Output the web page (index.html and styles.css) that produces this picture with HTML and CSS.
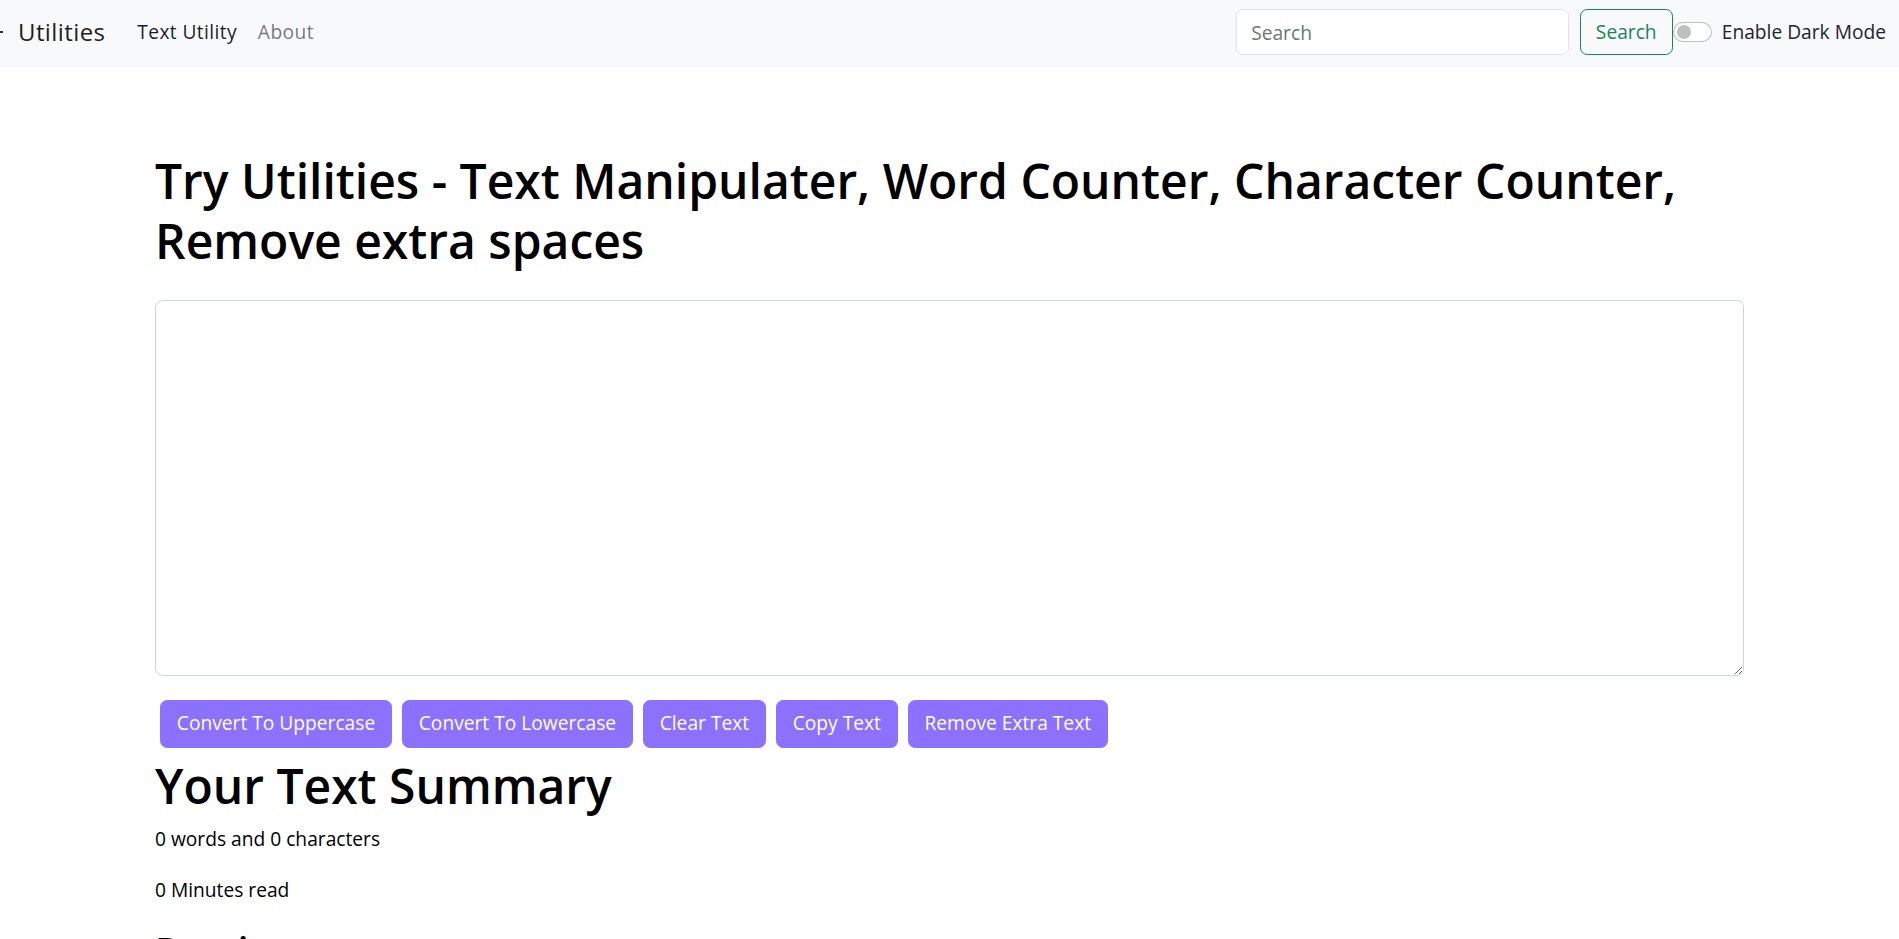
FILE: index.html
```html
<!DOCTYPE html>
<html lang="en">
<head>
<meta charset="utf-8">
<title>TextUtils - Utilities</title>
<link rel="stylesheet" href="styles.css">
</head>
<body>
<nav class="navbar">
  <div class="nav-left">
    <a class="brand" href="#"><span class="brand-dash"></span>Utilities</a>
    <ul class="nav-links">
      <li><a class="nav-link active" href="#">Text Utility</a></li>
      <li><a class="nav-link" href="#">About</a></li>
    </ul>
  </div>
  <div class="nav-right">
    <form class="search-form">
      <input class="search-input" type="search" placeholder="Search">
      <button class="search-btn" type="button">Search</button>
    </form>
    <div class="switch">
      <span class="switch-track"><span class="switch-knob"></span></span>
      <label class="switch-label">Enable Dark Mode</label>
    </div>
  </div>
</nav>
<div class="alert-space"></div>
<main class="container">
  <h1 class="page-title">Try Utilities - Text Manipulater, Word Counter, Character Counter, Remove extra spaces</h1>
  <div class="editor">
    <textarea class="text-box"></textarea>
  </div>
  <div class="actions">
    <button class="action-btn" type="button">Convert To Uppercase</button>
    <button class="action-btn" type="button">Convert To Lowercase</button>
    <button class="action-btn" type="button">Clear Text</button>
    <button class="action-btn" type="button">Copy Text</button>
    <button class="action-btn" type="button">Remove Extra Text</button>
  </div>
  <section class="summary">
    <h1 class="summary-title">Your Text Summary</h1>
    <p class="summary-line">0 words and 0 characters</p>
    <p class="summary-line">0 Minutes read</p>
    <h2 class="preview-title">Preview</h2>
    <p class="summary-line">Nothing to preview!</p>
  </section>
</main>
</body>
</html>
```
FILE: styles.css
```css
* { box-sizing: border-box; }
html, body { margin: 0; padding: 0; }
body {
  font-family: "Open Sans", "Noto Sans", sans-serif;
  font-size: 19.2px;
  line-height: 1.5;
  color: #000;
  background: #fff;
}
a { text-decoration: none; }

.navbar {
  display: flex;
  align-items: center;
  justify-content: space-between;
  height: 67px;
  padding: 0 13px 3px 0;
  background: #f8f9fa;
}
.nav-left { display: flex; align-items: center; letter-spacing: 0.4px; }
.brand {
  display: flex;
  align-items: center;
  font-size: 24px;
  line-height: 36px;
  color: rgba(0,0,0,.9);
  margin-right: 21.5px;
}
.brand-dash {
  display: inline-block;
  width: 3px;
  height: 1.5px;
  background: #333;
  margin-right: 15px;
}
.nav-links { display: flex; list-style: none; margin: 0; padding: 0; }
.nav-link {
  display: block;
  padding: 9.6px 10.4px;
  line-height: 28.8px;
  color: rgba(0,0,0,.55);
}
.nav-link.active { color: rgba(0,0,0,.9); }

.nav-right { display: flex; align-items: center; }
.search-form { display: flex; align-items: center; }
.search-input {
  width: 333px;
  height: 46px;
  margin-right: 11px;
  padding: 7.2px 14.4px;
  font: inherit;
  color: #212529;
  background: #fff;
  border: 1.2px solid #dee2e6;
  border-radius: 7.2px;
  outline: none;
}
.search-input::placeholder { color: #6c757d; }
.search-btn {
  width: 93px;
  height: 46px;
  padding: 7.2px 0;
  font: inherit;
  color: #198754;
  background: transparent;
  border: 1.2px solid #198754;
  border-radius: 7.2px;
}
.switch { display: flex; align-items: center; }
.switch-track {
  display: flex;
  align-items: center;
  width: 39px;
  height: 20px;
  padding: 0 3px;
  border: 1.2px solid rgba(0,0,0,.25);
  border-radius: 10px;
  background: #fff;
  margin-right: 10px;
}
.switch-knob {
  width: 14px;
  height: 14px;
  border-radius: 50%;
  background: #bfbfbf;
}
.switch-label { color: #212529; line-height: 28.8px; }

.alert-space { height: 60px; }

.container {
  width: 1589px;
  margin: 24px auto 0;
}
.page-title {
  margin: 0 0 9.6px;
  font-size: 48px;
  line-height: 60px;
  font-weight: 600;
}
.editor { margin: 29px 0 19.2px; }
.text-box {
  display: block;
  width: 100%;
  height: 376px;
  padding: 7.2px 14.4px;
  font: inherit;
  border: 1.2px solid #ced4da;
  border-radius: 7.2px;
  resize: vertical;
  outline: none;
}
.actions { display: flex; flex-wrap: wrap; margin-top: 1px; }
.action-btn {
  margin: 4.8px;
  padding: 8.5px 16px;
  font: inherit;
  line-height: 28.8px;
  color: #fff;
  background: #8c71fe;
  border: 1.2px solid #8c71fe;
  border-radius: 7.2px;
}
.summary { margin-top: 3px; }
.summary-title {
  margin: 0 0 9.6px;
  font-size: 48px;
  line-height: 60px;
  font-weight: 600;
}
.summary-line { margin: 0 0 22px; }
.preview-title {
  margin: 0 0 9.6px;
  font-size: 38.4px;
  line-height: 1.2;
  font-weight: 600;
}
```
